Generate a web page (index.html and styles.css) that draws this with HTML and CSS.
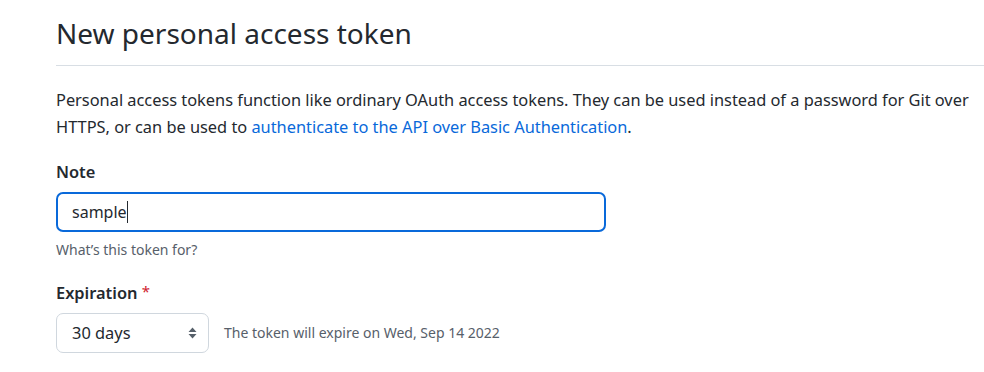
FILE: index.html
```html
<!DOCTYPE html>
<html lang="en">
<head>
  <meta charset="UTF-8">
  <meta name="viewport" content="width=device-width, initial-scale=1.0">
  <title>New personal access token</title>
  <link rel="stylesheet" href="styles.css">
</head>
<body>
  <div class="page">
    <div class="subhead">
      <h2 class="subhead-heading">New personal access token</h2>
    </div>

    <p class="intro">
      Personal access tokens function like ordinary OAuth access tokens. They can be used instead of a password for Git over
      HTTPS, or can be used to <a href="#">authenticate to the API over Basic Authentication</a>.
    </p>

    <div class="form-group">
      <label class="form-label" for="note">Note</label>
      <div class="input-wrap">
        <input class="form-control note-input" id="note" type="text" value="sample">
        <span class="caret"></span>
      </div>
      <p class="note">What’s this token for?</p>
    </div>

    <div class="form-group">
      <label class="form-label" for="expiry">Expiration <span class="required">*</span></label>
      <div class="expiry-row">
        <div class="select-box">
          <span>30 days</span>
          <svg class="select-arrow" width="9" height="12" viewBox="0 0 9 12">
            <path d="M4.5 0.5 L8.5 5 H0.5 Z M4.5 11.5 L0.5 7 H8.5 Z" fill="#57606a"/>
          </svg>
        </div>
        <span class="expiry-text">The token will expire on Wed, Sep 14 2022</span>
      </div>
    </div>
  </div>
</body>
</html>
```

FILE: styles.css
```css
body {
  margin: 0;
  background: #fff;
  color: #24292f;
  font-family: "Noto Sans", "Open Sans", sans-serif;
  font-size: 16.4px;
  line-height: 1.6;
}

.page {
  padding: 0 0 0 56px;
}

.subhead {
  border-bottom: 1px solid #d8dee4;
  padding-top: 14px;
  padding-bottom: 12px;
  margin-bottom: 20px;
}

.subhead-heading {
  margin: 0;
  font-size: 28px;
  font-weight: 400;
  line-height: 1.4;
}

.intro {
  margin: 0 0 19px;
  padding-right: 8px;
  line-height: 27px;
  letter-spacing: -0.02px;
}

.intro a {
  color: #0969da;
  text-decoration: none;
}

.form-group {
  margin-bottom: 17px;
}

.form-label {
  display: block;
  font-weight: 600;
  margin-bottom: 7px;
}

.required {
  color: #cf222e;
  font-weight: 400;
  font-size: 15px;
  vertical-align: 2px;
}

.form-control {
  box-sizing: border-box;
  font-family: inherit;
  font-size: 16px;
  color: #24292f;
}

.input-wrap {
  position: relative;
  width: 550px;
}

.note-input {
  display: block;
  width: 550px;
  height: 40px;
  padding: 0 14px;
  border: 2px solid #0969da;
  border-radius: 7px;
  outline: none;
}

/* text caret after "sample" */
.caret {
  position: absolute;
  left: 71px;
  top: 9px;
  width: 1px;
  height: 22px;
  background: #24292f;
}

.note {
  margin: 7px 0 0;
  font-size: 14px;
  color: #57606a;
}

.expiry-row {
  display: flex;
  align-items: center;
  gap: 15px;
}

.select-box {
  box-sizing: border-box;
  display: flex;
  align-items: center;
  justify-content: space-between;
  width: 153px;
  height: 40px;
  padding: 0 11px 0 15px;
  border: 1px solid #d0d7de;
  border-radius: 7px;
}

.expiry-text {
  font-size: 14px;
  color: #57606a;
}
```
